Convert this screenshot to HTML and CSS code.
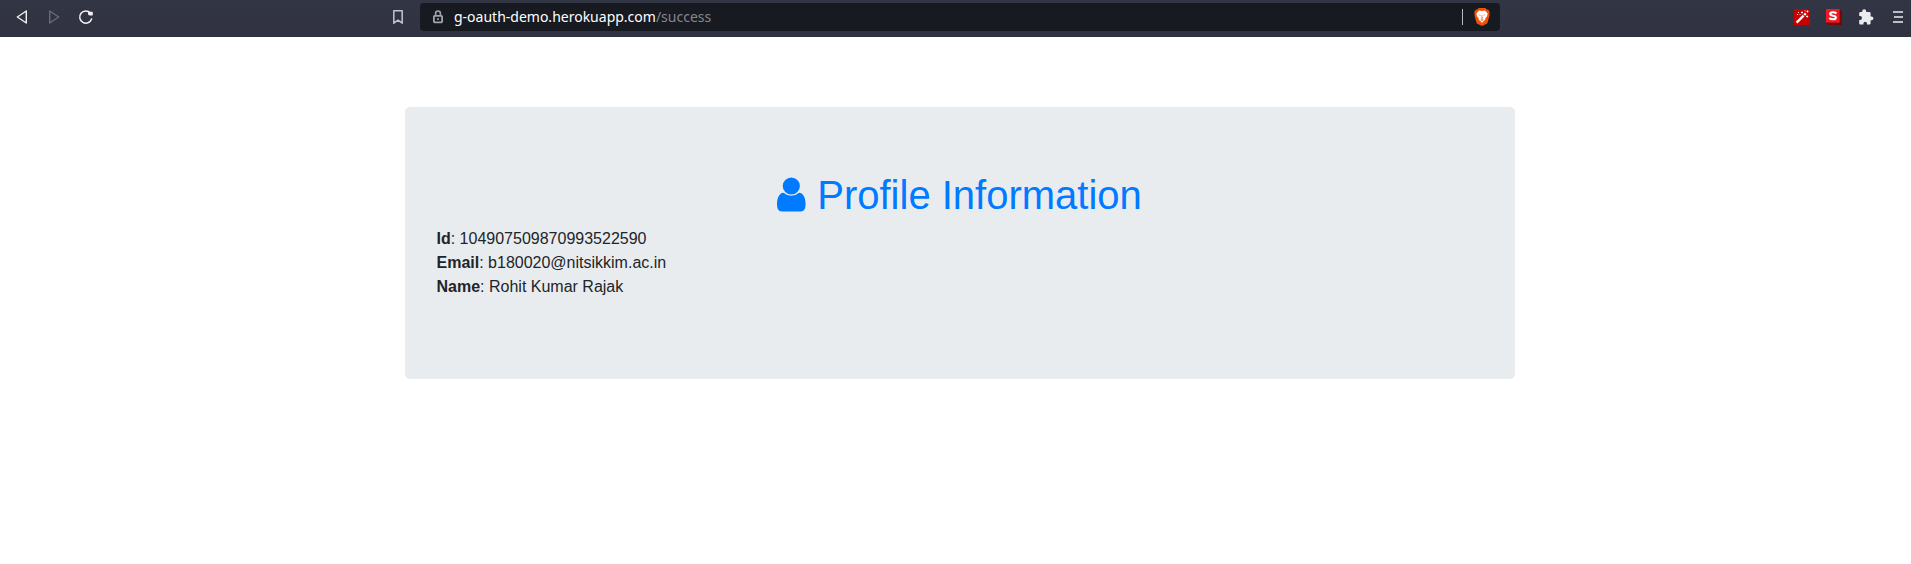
FILE: index.html
```html
<!DOCTYPE html>
<html lang="en">
<head>
<meta charset="utf-8">
<meta name="viewport" content="width=device-width, initial-scale=1">
<title>Profile Information</title>
<link rel="stylesheet" href="styles.css">
</head>
<body>
<header class="toolbar">
  <nav class="nav-buttons" aria-label="Browser navigation">
    <button class="tool" type="button" aria-label="Back">
      <svg width="12" height="16" viewBox="0 0 12 16" fill="none" stroke="#f1f1f3" stroke-width="1.4" stroke-linejoin="round"><path d="M10.3 2v12L1.3 8z"/></svg>
    </button>
    <button class="tool" type="button" aria-label="Forward" disabled>
      <svg width="12" height="16" viewBox="0 0 12 16" fill="none" stroke="#696b77" stroke-width="1.4" stroke-linejoin="round"><path d="M1.7 2v12l9-6z"/></svg>
    </button>
    <button class="tool" type="button" aria-label="Reload">
      <svg width="16" height="16" viewBox="0 0 16 16" fill="none"><path d="M12.400 4A6.100 6.100 0 1 0 13.600 10" stroke="#f1f1f3" stroke-width="1.500" stroke-linecap="round"/><path d="M10.500 2.800h3.600q.7 0 .7.700v2.200q0 .8-.8.800h-2.200q-1.800 0-1.800-1.800V3.300q0-.5.500-.5z" fill="#f1f1f3"/></svg>
    </button>
  </nav>
  <div class="location">
    <button class="tool" type="button" aria-label="Bookmark this page">
      <svg width="12" height="16" viewBox="0 0 12 16" fill="none" stroke="#c3c4ca" stroke-width="1.500" stroke-linejoin="round"><path d="M1.800 1.800h8.400v12.400L6 11.200l-4.200 3z"/></svg>
    </button>
    <div class="address">
      <svg class="lock" width="10" height="14" viewBox="0 0 10 14" fill="none" stroke="#a2a4a9"><rect x=".9" y="5.800" width="8.200" height="6.600" rx=".8" stroke-width="1.800"/><path d="M2.600 5.500V3.400a2.400 2.400 0 0 1 4.800 0v2.100" stroke-width="1.600"/><path d="M4.100 9.100h1.800" stroke-width="1.800"/></svg>
      <a class="url" href="#profile">g-oauth-demo.herokuapp.com<span class="path">/success</span></a>
      <button class="shield" type="button" aria-label="Brave Shields">
        <svg width="16" height="18" viewBox="0 0 16 18"><path d="M4.700 0h6.600l1.500 1.600 1.500.1 1.500 2.600-.5 1.700.3 1.200-2 7.200q-.4 1-1.300 1.600L8 18l-4.300-2q-.9-.6-1.300-1.600l-2-7.200L.7 6 .2 4.300l1.500-2.600 1.500-.1z" fill="#f1500b"/><path d="M5 2.600 8 3.100l3-.5 2.600 3-.6 2.700-1.900 2.400.2 1.300-1.500.7L8 15.100l-1.800-2.400-1.500-.7.200-1.300L3 8.300l-.6-2.700z" fill="#fff"/><path d="m4.300 6.200 2.500.7-.6 1zm7.400 0-2.500.7.6 1zM7.600 7h.8l.1 2.200 1 .8L8 11l-1.500-1 1-.8zM6 11.800l2-.9 2 .9-2 1.200z" fill="#f1500b" opacity=".65"/></svg>
      </button>
    </div>
  </div>
  <div class="extensions">
    <button class="tool" type="button" aria-label="Magic wand extension">
      <svg width="16" height="16" viewBox="0 0 16 16"><path fill="#c80000" d="M0 0h16v16H0z"/><path d="m2.600 13.700 7-7" stroke="#fff" stroke-width="2.400"/><path d="m10.200 6 1.600-1.600" stroke="#fff" stroke-width="2.400"/><path d="M7 3.500h2M8 2.500v2M12.500 2.500h2M13.500 1.500v2M12.200 7.500h2M13.200 6.500v2M4 3.500h1M3 5.500h1M5.500 5.500h1M10.500 1.800h1" stroke="#fff" stroke-width=".9"/></svg>
    </button>
    <button class="tool" type="button" aria-label="S extension">
      <svg width="16" height="16" viewBox="0 0 16 16"><path d="M13.500 0 16 2.500V16H2.500L0 13.500z" fill="#760508"/><path d="M0 0h13.600v13.600H0z" fill="#ed1c24"/><path d="M10.400 4.400Q9.200 3.300 6.900 3.300 4.200 3.300 4.200 5 4.200 6.300 7 6.700 9.800 7 9.800 8.500 9.800 10.300 6.900 10.300 4.500 10.300 3.300 9.100" fill="none" stroke="#fff" stroke-width="2.100"/></svg>
    </button>
    <button class="tool" type="button" aria-label="Extensions">
      <svg width="16" height="16" viewBox="0 0 16 16" fill="#ececef"><path d="M13.500 7.400h-.9V4.300q0-1.300-1.300-1.300H8.200v-.8a2 2 0 0 0-4 0V3H2.500Q1.200 3 1.200 4.300v2.800h.9a1.900 1.900 0 0 1 0 3.800h-.9v3.300q0 1.300 1.300 1.300h2.900v-.9a1.800 1.800 0 0 1 3.600 0v.9h2.300q1.300 0 1.300-1.300v-2.900h.9a1.950 1.950 0 0 0 0-3.900z"/></svg>
    </button>
    <button class="tool menu" type="button" aria-label="Menu">
      <svg width="10" height="12" viewBox="0 0 10 12" fill="#bdbec4"><path d="M0 0h10v2H0zM1 5h9v2H1zM0 10h10v2H0z"/></svg>
    </button>
  </div>
</header>
<div class="page">
<main class="container">
  <section class="jumbotron" id="profile">
    <h1 class="title"><svg class="user" width="29" height="35" viewBox="0 0 29 35" fill="currentColor" aria-hidden="true"><circle cx="14.300" cy="9" r="8.600"/><path d="M6.500 15.700Q10 18.700 14.300 18.700T22.100 15.700C27 16 28.600 22 28.600 27.700Q28.600 34.500 23 34.500H5.600Q0 34.500 0 27.700C0 22 1.600 16 6.500 15.700z"/></svg> Profile Information</h1>
    <p class="details">
      <strong>Id</strong>: 104907509870993522590<br>
      <strong>Email</strong>: b180020@nitsikkim.ac.in<br>
      <strong>Name</strong>: Rohit Kumar Rajak
    </p>
  </section>
</main>
</div>
</body>
</html>
```
FILE: styles.css
```css
* {
  box-sizing: border-box;
}

body {
  margin: 0;
  background: #fff;
  color: #212529;
  font-family: "Liberation Sans", Arial, sans-serif;
  font-size: 16px;
  line-height: 24px;
}

.toolbar {
  display: flex;
  justify-content: space-between;
  align-items: flex-start;
  height: 37px;
  padding: 3px 0 0 6px;
  background: linear-gradient(#323544, #303241);
}

.nav-buttons,
.extensions {
  display: flex;
}

.extensions {
  padding-left: 6px;
}

.tool {
  display: flex;
  flex: none;
  align-items: center;
  justify-content: center;
  width: 32px;
  height: 28px;
  padding: 0;
  border: 0;
  background: none;
}

.menu {
  justify-content: flex-start;
  width: 29px;
  padding-left: 11px;
}

.location {
  display: flex;
  flex: 0 1 1118px;
  gap: 6px;
  min-width: 0;
}

.address {
  display: flex;
  flex: 1;
  align-items: center;
  min-width: 0;
  height: 28px;
  padding: 0 10px 0 13px;
  border-radius: 4px;
  background: #171a21;
}

.lock {
  flex: none;
}

.url {
  flex: 1;
  min-width: 0;
  margin-left: 11px;
  overflow: hidden;
  color: #fff;
  font-family: "Noto Sans", sans-serif;
  font-size: 14px;
  line-height: 20px;
  text-decoration: none;
  white-space: nowrap;
}

.path {
  color: #85878b;
}

.shield {
  display: flex;
  padding: 0 0 0 11px;
  border: 0;
  border-left: 1px solid #b9babd;
  background: none;
  height: 16px;
  align-items: center;
}

.shield svg {
  flex: none;
}

.page {
  padding-left: 8px;
}

.container {
  max-width: 1140px;
  margin: 0 auto;
  padding: 70px 15px 0;
}

.jumbotron {
  padding: 64px 32px;
  border-radius: 5px;
  background: #e9ecef;
}

.title {
  margin: 0 0 8px;
  color: #007bff;
  font-size: 40px;
  font-weight: 400;
  line-height: 48px;
  text-align: center;
}

.user {
  vertical-align: -3px;
}

.details {
  margin: 0 0 16px;
}
```
